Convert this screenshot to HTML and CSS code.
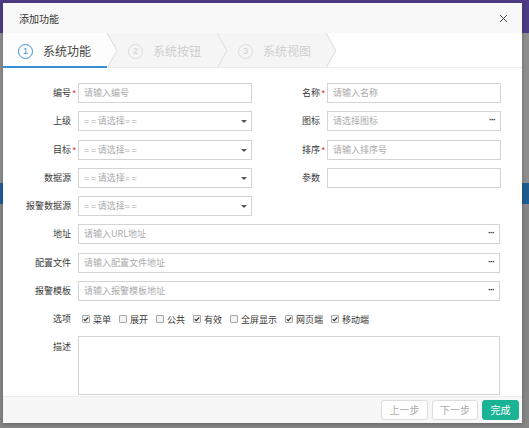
FILE: index.html
```html
<!DOCTYPE html>
<html lang="zh-CN">
<head>
<meta charset="utf-8">
<title>添加功能</title>
<link rel="stylesheet" href="styles.css">
</head>
<body>
<div class="backdrop">
  <div class="bg-top"></div>
  <div class="bg-gray bg-gray-1"></div>
  <div class="bg-band"></div>
  <div class="bg-gray bg-gray-2"></div>
</div>

<div class="modal">
  <div class="modal-header">
    <span class="modal-title">添加功能</span>
    <svg class="close" width="9" height="9" viewBox="0 0 9 9"><path d="M1 1L8 8M8 1L1 8" stroke="#444" stroke-width="1" fill="none"/></svg>
  </div>

  <div class="steps">
    <svg class="steps-bg" width="519" height="35" viewBox="0 0 519 35">
      <polygon points="0,0 104,0 114,17.5 104,35 0,35" fill="#fdfdfd"/>
      <polygon points="104,0 214,0 224,17.5 214,35 104,35 114,17.5" fill="#f5f5f5"/>
      <polygon points="214,0 323,0 333,17.5 323,35 214,35 224,17.5" fill="#f5f5f5"/>
      <polyline points="104,0 114,17.5 104,35" fill="none" stroke="#dcdcdc" stroke-width="1"/>
      <polyline points="214,0 224,17.5 214,35" fill="none" stroke="#dcdcdc" stroke-width="1"/>
      <polyline points="323,0 333,17.5 323,35" fill="none" stroke="#dcdcdc" stroke-width="1"/>
      <rect x="0" y="34" width="519" height="1" fill="#ececec"/>
      <rect x="0" y="33" width="104" height="2" fill="#3b8fd4"/>
    </svg>
    <div class="step step-1 active"><span class="num">1</span><span class="step-text">系统功能</span></div>
    <div class="step step-2"><span class="num">2</span><span class="step-text">系统按钮</span></div>
    <div class="step step-3"><span class="num">3</span><span class="step-text">系统视图</span></div>
  </div>

  <div class="modal-body">
    <div class="row">
      <div class="field"><span class="label">编号</span><span class="req">*</span><div class="input">请输入编号</div></div>
      <div class="field"><span class="label">名称</span><span class="req">*</span><div class="input">请输入名称</div></div>
    </div>
    <div class="row">
      <div class="field"><span class="label">上级</span><span class="req"></span><div class="input select"><span class="eq">==</span>请选择<span class="eq">==</span><span class="caret"></span></div></div>
      <div class="field"><span class="label">图标</span><span class="req"></span><div class="input more">请选择图标<span class="dots">···</span></div></div>
    </div>
    <div class="row">
      <div class="field"><span class="label">目标</span><span class="req">*</span><div class="input select"><span class="eq">==</span>请选择<span class="eq">==</span><span class="caret"></span></div></div>
      <div class="field"><span class="label">排序</span><span class="req">*</span><div class="input">请输入排序号</div></div>
    </div>
    <div class="row">
      <div class="field"><span class="label">数据源</span><span class="req"></span><div class="input select"><span class="eq">==</span>请选择<span class="eq">==</span><span class="caret"></span></div></div>
      <div class="field"><span class="label">参数</span><span class="req"></span><div class="input"></div></div>
    </div>
    <div class="row">
      <div class="field"><span class="label">报警数据源</span><span class="req"></span><div class="input select"><span class="eq">==</span>请选择<span class="eq">==</span><span class="caret"></span></div></div>
    </div>
    <div class="row">
      <div class="field wide"><span class="label">地址</span><span class="req"></span><div class="input more">请输入URL地址<span class="dots">···</span></div></div>
    </div>
    <div class="row">
      <div class="field wide"><span class="label">配置文件</span><span class="req"></span><div class="input more">请输入配置文件地址<span class="dots">···</span></div></div>
    </div>
    <div class="row">
      <div class="field wide"><span class="label">报警模板</span><span class="req"></span><div class="input more">请输入报警模板地址<span class="dots">···</span></div></div>
    </div>
    <div class="row options-row">
      <div class="field wide"><span class="label">选项</span><span class="req"></span>
        <div class="options">
          <span class="opt"><span class="cb on"><svg width="8" height="8" viewBox="0 0 8 8"><path d="M1.8 4.2L3.3 5.6L6.2 2.4" stroke="#333" stroke-width="1.2" fill="none"/></svg></span>菜单</span>
          <span class="opt"><span class="cb"></span>展开</span>
          <span class="opt"><span class="cb"></span>公共</span>
          <span class="opt"><span class="cb on"><svg width="8" height="8" viewBox="0 0 8 8"><path d="M1.8 4.2L3.3 5.6L6.2 2.4" stroke="#333" stroke-width="1.2" fill="none"/></svg></span>有效</span>
          <span class="opt"><span class="cb"></span>全屏显示</span>
          <span class="opt"><span class="cb on"><svg width="8" height="8" viewBox="0 0 8 8"><path d="M1.8 4.2L3.3 5.6L6.2 2.4" stroke="#333" stroke-width="1.2" fill="none"/></svg></span>网页端</span>
          <span class="opt"><span class="cb on"><svg width="8" height="8" viewBox="0 0 8 8"><path d="M1.8 4.2L3.3 5.6L6.2 2.4" stroke="#333" stroke-width="1.2" fill="none"/></svg></span>移动端</span>
        </div>
      </div>
    </div>
    <div class="row desc-row">
      <div class="field wide desc"><span class="label">描述</span><span class="req"></span><div class="textarea"></div></div>
    </div>
  </div>

  <div class="modal-footer">
    <button class="btn disabled prev">上一步</button>
    <button class="btn disabled next">下一步</button>
    <button class="btn success finish">完成</button>
  </div>
</div>
</body>
</html>
```

FILE: styles.css
```css
* { box-sizing: border-box; }

html, body {
  margin: 0;
  padding: 0;
}

body {
  width: 529px;
  height: 428px;
  overflow: hidden;
  position: relative;
  font-family: "Noto Sans CJK SC", "Noto Sans", sans-serif;
  background: #8a8a8a;
}

.backdrop {
  display: flex;
  flex-direction: column;
  height: 428px;
}

.bg-top { height: 33px; background: #4d3c84; }
.bg-gray { background: #8d8d8d; }
.bg-gray-1 { height: 150px; }
.bg-band { height: 21px; background: #1f5d91; }
.bg-gray-2 { flex: 1; background: #858585; }

.modal {
  position: absolute;
  left: 3px;
  top: 3px;
  width: 519px;
  height: 420px;
  background: #fff;
  display: flex;
  flex-direction: column;
  box-shadow: 0 1px 4px rgba(0,0,0,0.25);
}

.modal-header {
  height: 30px;
  background: #f8f8f8;
  display: flex;
  align-items: center;
  justify-content: space-between;
  padding: 0 14px 0 16px;
}

.modal-title {
  font-size: 10px;
  color: #333;
}

.close { display: block; }

.steps {
  position: relative;
  height: 35px;
  display: flex;
  align-items: center;
}

.steps-bg {
  position: absolute;
  left: 0;
  top: 0;
}

.step {
  position: relative;
  display: flex;
  align-items: center;
  height: 35px;
  padding-top: 1px;
}

.step-1 { width: 104px; padding-left: 15px; }
.step-2 { width: 110px; padding-left: 21px; }
.step-3 { width: 109px; padding-left: 21px; }

.num {
  width: 15px;
  height: 15px;
  border-radius: 50%;
  border: 1px solid #dcdcdc;
  color: #d0d0d0;
  font-size: 9px;
  line-height: 13px;
  text-align: center;
  font-family: "Liberation Sans", sans-serif;
}

.step-text {
  margin-left: 10px;
  font-size: 12px;
  color: #cfcfcf;
  line-height: 14px;
}

.step.active .num { border-color: #3b8fd4; color: #3b8fd4; }
.step.active .step-text { color: #444; }

.modal-body {
  height: 328px;
  overflow: hidden;
  padding: 15px 22px 0 0;
  display: flex;
  flex-direction: column;
  gap: 8.3px;
}

.row {
  display: flex;
  height: 20px;
  flex-shrink: 0;
}

.field {
  display: grid;
  grid-template-columns: 68px 7px 174px;
  align-items: center;
  width: 249px;
}

.field.wide {
  width: 497px;
  grid-template-columns: 68px 7px 1fr;
}

.label {
  font-size: 9px;
  color: #383838;
  text-align: right;
  line-height: 20px;
  white-space: nowrap;
}

.req {
  color: #d9262b;
  font-size: 9px;
  line-height: 20px;
  padding-left: 1.5px;
  font-family: "Liberation Sans", sans-serif;
}

.input {
  position: relative;
  height: 20px;
  border: 1px solid #d4d4d4;
  font-size: 9px;
  color: #aaa;
  line-height: 18px;
  padding-left: 5px;
  white-space: nowrap;
}

.eq {
  letter-spacing: 1.6px;
  font-family: "Liberation Sans", sans-serif;
}

.caret {
  position: absolute;
  right: 4px;
  top: 8px;
  width: 0;
  height: 0;
  border-left: 3px solid transparent;
  border-right: 3px solid transparent;
  border-top: 3px solid #555;
}

.dots {
  position: absolute;
  right: 5px;
  top: 0;
  color: #333;
  font-size: 9px;
  line-height: 16px;
  font-family: "Liberation Sans", sans-serif;
  letter-spacing: -1px;
  font-weight: bold;
}

.options {
  display: flex;
  align-items: center;
  padding-left: 4px;
  font-size: 9px;
  color: #383838;
  gap: 8px;
}

.opt {
  display: flex;
  align-items: center;
  gap: 3px;
  white-space: nowrap;
}

.cb {
  width: 8px;
  height: 8px;
  border: 1px solid #a8a8a8;
  border-radius: 1px;
  background: #f3f3f3;
  display: flex;
  align-items: center;
  justify-content: center;
}

.cb svg { display: block; margin: -1px; }

.desc-row {
  height: 59px;
  margin-top: -1.7px;
}

.field.desc {
  align-items: start;
  height: 59px;
}

.field.desc .label { margin-top: 1px; }

.textarea {
  height: 59px;
  border: 1px solid #d4d4d4;
}

.modal-footer {
  height: 27px;
  background: #f7f7f7;
  border-top: 1px solid #ececec;
  display: flex;
  justify-content: flex-end;
  align-items: flex-start;
  padding: 3px 3px 0 0;
  gap: 4px;
}

.btn {
  height: 20px;
  font-family: "Noto Sans CJK SC", sans-serif;
  font-size: 10px;
  line-height: 18px;
  padding: 0;
  border-radius: 3px;
  border: 1px solid #ddd;
  background: #fff;
  color: #aaa;
}

.prev { width: 47px; }
.next { width: 46px; }
.finish {
  width: 37px;
  background: #1ab394;
  border-color: #1ab394;
  color: #fff;
}
```
